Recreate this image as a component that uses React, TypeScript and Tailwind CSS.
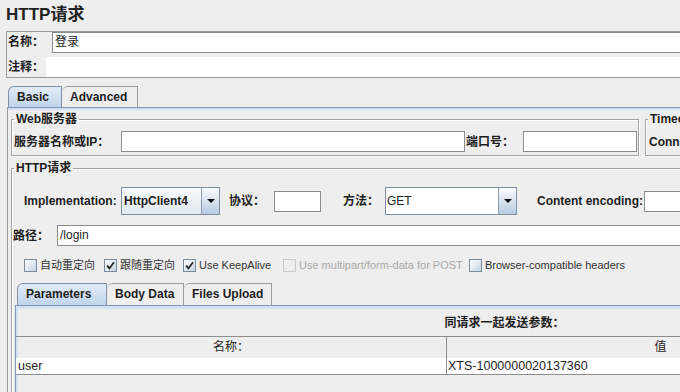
import React from 'react';

type CheckProps = { checked?: boolean; disabled?: boolean; label: string; width: string };

function CheckItem({ checked, disabled, label, width }: CheckProps) {
  return (
    <div className={`flex items-center ${width}`}>
      <span
        className={
          disabled
            ? 'flex h-[13px] w-[13px] items-center justify-center border border-[#c9c9c9] bg-[#eeeeee]'
            : 'flex h-[13px] w-[13px] items-center justify-center border border-[#7d8c9c] bg-linear-to-br from-white to-[#c3d2e3]'
        }
      >
        {checked && (
          <svg width="9" height="9" viewBox="0 0 9 9">
            <path d="M1.2 4.6 L3.4 7.4 L8 1.2" stroke="#1f1f1f" strokeWidth="1.7" fill="none" />
          </svg>
        )}
      </span>
      <span className={disabled ? 'ml-[3px] text-[11px] text-[#a9a9a9]' : 'ml-[3px] text-[11px] text-[#333]'}>
        {label}
      </span>
    </div>
  );
}

function Arrow() {
  return (
    <div className="flex w-[18px] items-center justify-center border-l border-[#8b9bb0] bg-linear-to-b from-[#fbfcfe] to-[#b7cbe1]">
      <svg width="8" height="4" viewBox="0 0 8 4">
        <path d="M0 0 H8 L4 4 Z" fill="#111" />
      </svg>
    </div>
  );
}

export default function App() {
  return (
    <div className="h-[392px] w-[680px] overflow-hidden bg-[#eeeeee] font-['Liberation_Sans','Noto_Sans_CJK_SC',sans-serif] text-[#1e1e1e]">
      <div className="w-[1000px]">
        {/* title */}
        <div className="h-[31px] pl-[6px] pt-[5px] text-[17px] font-bold leading-[19px] text-[#222]">HTTP请求</div>

        {/* name / comment */}
        <div className="ml-[6px] h-[47px] border-y border-l border-[#9a9a9a]">
          <div className="flex h-[21px]">
            <span className="w-[45px] pl-[1px] text-[12px] font-bold leading-[21px]">名称：</span>
            <div className="flex-1 border border-[#8c8c8c] bg-white pl-[2px] text-[12px] leading-[19px]">登录</div>
          </div>
          <div className="mt-[4px] flex h-[20px]">
            <span className="w-[39px] pl-[1px] text-[12px] font-bold leading-[20px]">注释：</span>
            <div className="flex-1 bg-white" />
          </div>
        </div>

        {/* Basic / Advanced tabs */}
        <div className="ml-[8px] mt-[8px] flex h-[21px] items-end">
          <div className="h-[21px] w-[54px] rounded-tl-[6px] border-x border-t border-[#8093ad] bg-linear-to-b from-[#e2ecf7] to-[#bfd4ea] pl-[8px] text-[12px] font-bold leading-[20px]">
            Basic
          </div>
          <div className="h-[21px] w-[76px] rounded-tl-[6px] border-r border-t border-[#9b9b9b] pl-[8px] text-[12px] font-bold leading-[20px]">
            Advanced
          </div>
        </div>

        <div className="ml-[7px] border-l border-t border-l-[#9a9a9a] border-t-[#8096b8] pl-[3px] pt-[5px] shadow-[inset_0_2px_0_#cddff1]">
          {/* server row */}
          <div className="flex items-start">
            <fieldset className="w-[628px] border border-[#a3a3a3] shadow-[inset_1px_1px_0_#fff,1px_1px_0_#fff]">
              <legend className="ml-[2px] px-[2px] text-[12px] font-bold leading-[12px]">Web服务器</legend>
              <div className="flex items-center pb-[3px] pl-[2px] pt-[6px]">
                <span className="w-[107px] text-[12px] font-bold">服务器名称或IP：</span>
                <div className="h-[21px] w-[344px] border border-[#8c8c8c] bg-white" />
                <span className="ml-[1px] w-[57px] text-[12px] font-bold">端口号：</span>
                <div className="h-[21px] w-[114px] border border-[#8c8c8c] bg-white" />
              </div>
            </fieldset>
            <fieldset className="ml-[6px] w-[250px] border border-[#a3a3a3] shadow-[inset_1px_1px_0_#fff,1px_1px_0_#fff]">
              <legend className="ml-[2px] px-[2px] text-[12px] font-bold leading-[12px]">Timeouts (milliseconds)</legend>
              <div className="flex items-center pb-[3px] pl-[3px] pt-[6px]">
                <span className="w-[60px] text-[12px] font-bold">Connect:</span>
                <div className="h-[21px] w-[80px] border border-[#8c8c8c] bg-white" />
              </div>
            </fieldset>
          </div>

          {/* HTTP request */}
          <fieldset className="mt-[6px] w-[985px] border border-[#a3a3a3] shadow-[inset_1px_1px_0_#fff]">
            <legend className="ml-[2px] px-[2px] text-[12px] font-bold leading-[12px]">HTTP请求</legend>

            <div className="mt-[13px] flex h-[28px] items-center pl-[12px]">
              <span className="w-[97px] text-[12px] font-bold">Implementation:</span>
              <div className="flex h-[28px] w-[99px] border border-[#7f8fa3]">
                <div className="flex flex-1 items-center bg-linear-to-b from-[#f9fbfd] to-[#e1e8f0] pl-[2px] text-[12px] font-bold">
                  HttpClient4
                </div>
                <Arrow />
              </div>
              <span className="w-[54px] pl-[9px] text-[12px] font-bold">协议：</span>
              <div className="h-[21px] w-[47px] border border-[#8c8c8c] bg-white" />
              <span className="ml-[22px] w-[42px] text-[12px] font-bold">方法：</span>
              <div className="flex h-[28px] w-[132px] border border-[#7f8fa3]">
                <div className="flex flex-1 items-center bg-white pl-[1px] text-[12px]">GET</div>
                <Arrow />
              </div>
              <span className="ml-[20px] w-[107px] text-[12px] font-bold">Content encoding:</span>
              <div className="h-[21px] w-[100px] border border-[#8c8c8c] bg-white" />
            </div>

            <div className="mt-[10px] flex h-[21px] items-center pl-[1px]">
              <span className="w-[44px] text-[12px] font-bold">路径：</span>
              <div className="h-[21px] flex-1 border border-[#8c8c8c] bg-white pl-[2px] text-[12px] leading-[19px]">/login</div>
            </div>

            <div className="mt-[11px] flex h-[17px] items-center pl-[12px]">
              <CheckItem label="自动重定向" width="w-[80px]" />
              <CheckItem label="跟随重定向" checked width="w-[79px]" />
              <CheckItem label="Use KeepAlive" checked width="w-[100px]" />
              <CheckItem label="Use multipart/form-data for POST" disabled width="w-[186px]" />
              <CheckItem label="Browser-compatible headers" width="w-[200px]" />
            </div>

            {/* parameters tabs */}
            <div className="ml-[3px] mt-[9px]">
              <div className="flex h-[22px] items-end pl-[2px]">
                <div className="h-[22px] w-[90px] rounded-tl-[6px] border-x border-t border-[#8093ad] bg-linear-to-b from-[#e2ecf7] to-[#bfd4ea] pl-[8px] text-[12px] font-bold leading-[21px]">
                  Parameters
                </div>
                <div className="h-[22px] w-[77px] rounded-tl-[6px] border-r border-t border-[#9b9b9b] pl-[8px] text-[12px] font-bold leading-[21px]">
                  Body Data
                </div>
                <div className="h-[22px] w-[88px] rounded-tl-[6px] border-r border-t border-[#9b9b9b] pl-[8px] text-[12px] font-bold leading-[21px]">
                  Files Upload
                </div>
              </div>
              <div className="h-[120px] border-l border-t border-[#8096b8] shadow-[inset_2px_3px_0_#d3e2f2]">
                <div className="h-[30px] w-[977px] pt-[10px] text-center text-[12px] font-bold leading-[14px]">
                  同请求一起发送参数：
                </div>
                <div className="w-[858px] border-t border-[#8c8c8c]">
                  <div className="flex h-[21px] text-[12px] leading-[21px]">
                    <div className="w-[430px] text-center">名称：</div>
                    <div className="flex-1 border-l border-[#8c8c8c] text-center">值</div>
                  </div>
                  <div className="flex h-[17px] border-b border-[#8c8c8c] bg-white text-[12.5px] leading-[16px]">
                    <div className="w-[430px] pl-[2px]">user</div>
                    <div className="flex-1 border-l border-[#8c8c8c] pl-[1px]">XTS-1000000020137360</div>
                  </div>
                </div>
              </div>
            </div>
          </fieldset>
        </div>
      </div>
    </div>
  );
}
